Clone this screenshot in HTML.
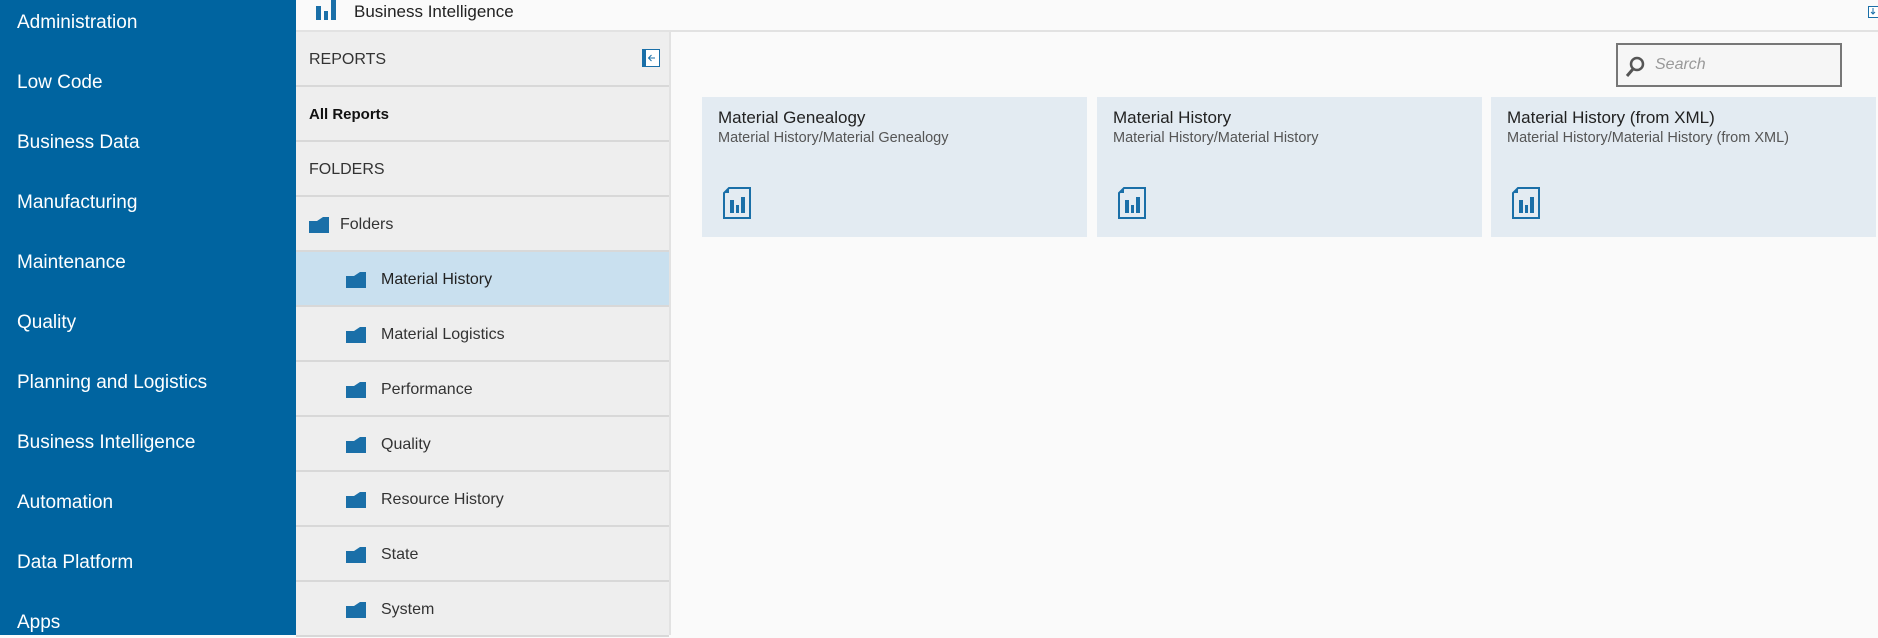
<!DOCTYPE html>
<html><head><style>
*{margin:0;padding:0;box-sizing:border-box}
body{width:1878px;height:635px;overflow:hidden;background:#fafafa;font-family:"Liberation Sans",sans-serif;position:relative}
#side{position:absolute;left:0;top:0;width:296px;height:635px;background:#0064a0}
#side div{position:absolute;left:17px;color:#fff;font-size:19px;line-height:24px}
#hdr{position:absolute;left:296px;top:0;width:1582px;height:32px;background:#fafafa;border-bottom:2px solid #e2e2e2}
#hdr .t{position:absolute;left:58px;top:2px;font-size:17px;color:#222}
#panel{position:absolute;left:296px;top:32px;width:375px;height:603px;background:#eeeeee;border-right:2px solid #e2e2e2}
.row{position:absolute;left:0;width:373px;height:55px;border-bottom:2px solid #d8d8d8;font-size:16px;color:#333;line-height:56px}
.row span{position:absolute}
.fold{position:absolute;top:20px;width:20px;height:16px}
.card{position:absolute;top:97px;width:385px;height:140px;background:#e3ebf2}
.card .a{position:absolute;left:16px;top:11px;font-size:17px;color:#222}
.card .b{position:absolute;left:16px;top:33px;font-size:14.5px;color:#555}
.card svg{position:absolute;left:21px;top:90px}
</style></head><body>
<div id="side">
<div style="top:11px">Administration</div>
<div style="top:71px">Low Code</div>
<div style="top:131px">Business Data</div>
<div style="top:191px">Manufacturing</div>
<div style="top:251px">Maintenance</div>
<div style="top:311px">Quality</div>
<div style="top:371px">Planning and Logistics</div>
<div style="top:431px">Business Intelligence</div>
<div style="top:491px">Automation</div>
<div style="top:551px">Data Platform</div>
<div style="top:611px">Apps</div>
</div>
<div id="hdr">
<svg style="position:absolute;left:20px;top:0" width="20" height="21"><rect x="0" y="6" width="5" height="14" fill="#1a6fa8"/><rect x="8" y="11" width="4" height="9" fill="#1a6fa8"/><rect x="15" y="0" width="5" height="20" fill="#1a6fa8"/></svg>
<div class="t">Business Intelligence</div>
<svg style="position:absolute;right:0;top:6px" width="10" height="12"><rect x="0.5" y="0.5" width="11" height="11" fill="#fff" stroke="#1a6fa8"/><path d="M5 2v6M3 6l2 2 2-2" stroke="#1a6fa8" fill="none"/></svg>
</div>
<div id="panel">
<div class="row" style="top:0;height:55px"><span style="left:13px">REPORTS</span>
<svg style="position:absolute;left:346px;top:17px" width="18" height="18"><rect x="0.5" y="0.5" width="17" height="17" fill="#fff" stroke="#1a6fa8"/><rect x="0" y="0" width="4" height="18" fill="#1a6fa8"/><path d="M13 9H7M9.5 6L6.5 9l3 3" stroke="#1a6fa8" fill="none"/></svg></div>
<div class="row" style="top:55px"><span style="left:13px;font-weight:bold;color:#111;font-size:15px">All Reports</span></div>
<div class="row" style="top:110px"><span style="left:13px">FOLDERS</span></div>
<div class="row" style="top:165px"><svg class="fold" style="left:13px" viewBox="0 0 20 16"><path d="M0 4h8l6-4h6v16H0z" fill="#1a6fa8"/></svg><span style="left:44px">Folders</span></div>
<div class="row" style="top:220px;background:#c9e0ef"><svg class="fold" style="left:50px" viewBox="0 0 20 16"><path d="M0 4h8l6-4h6v16H0z" fill="#1a6fa8"/></svg><span style="left:85px;color:#222">Material History</span></div>
<div class="row" style="top:275px"><svg class="fold" style="left:50px" viewBox="0 0 20 16"><path d="M0 4h8l6-4h6v16H0z" fill="#1a6fa8"/></svg><span style="left:85px">Material Logistics</span></div>
<div class="row" style="top:330px"><svg class="fold" style="left:50px" viewBox="0 0 20 16"><path d="M0 4h8l6-4h6v16H0z" fill="#1a6fa8"/></svg><span style="left:85px">Performance</span></div>
<div class="row" style="top:385px"><svg class="fold" style="left:50px" viewBox="0 0 20 16"><path d="M0 4h8l6-4h6v16H0z" fill="#1a6fa8"/></svg><span style="left:85px">Quality</span></div>
<div class="row" style="top:440px"><svg class="fold" style="left:50px" viewBox="0 0 20 16"><path d="M0 4h8l6-4h6v16H0z" fill="#1a6fa8"/></svg><span style="left:85px">Resource History</span></div>
<div class="row" style="top:495px"><svg class="fold" style="left:50px" viewBox="0 0 20 16"><path d="M0 4h8l6-4h6v16H0z" fill="#1a6fa8"/></svg><span style="left:85px">State</span></div>
<div class="row" style="top:550px"><svg class="fold" style="left:50px" viewBox="0 0 20 16"><path d="M0 4h8l6-4h6v16H0z" fill="#1a6fa8"/></svg><span style="left:85px">System</span></div>
</div>
<div style="position:absolute;left:1616px;top:43px;width:226px;height:44px;border:2px solid #777;background:#f6f6f6">
<svg style="position:absolute;left:7px;top:11px" width="20" height="22"><circle cx="12" cy="8" r="6" fill="none" stroke="#555" stroke-width="2.5"/><path d="M8 13L2 20" stroke="#555" stroke-width="3"/></svg>
<span style="position:absolute;left:37px;top:11px;font-size:16px;font-style:italic;color:#999">Search</span></div>
<div class="card" style="left:702px"><div class="a">Material Genealogy</div><div class="b">Material History/Material Genealogy</div>
<svg width="28" height="32" viewBox="0 0 28 32"><path d="M6 1H27V31H1V6Z" fill="none" stroke="#1a6fa8" stroke-width="2"/><path d="M1 6L6 1V6Z" fill="#1a6fa8"/><rect x="7" y="13" width="4" height="13" fill="#1a6fa8"/><rect x="13" y="18" width="3" height="8" fill="#1a6fa8"/><rect x="18" y="10" width="4" height="16" fill="#1a6fa8"/></svg></div>
<div class="card" style="left:1097px"><div class="a">Material History</div><div class="b">Material History/Material History</div>
<svg width="28" height="32" viewBox="0 0 28 32"><path d="M6 1H27V31H1V6Z" fill="none" stroke="#1a6fa8" stroke-width="2"/><path d="M1 6L6 1V6Z" fill="#1a6fa8"/><rect x="7" y="13" width="4" height="13" fill="#1a6fa8"/><rect x="13" y="18" width="3" height="8" fill="#1a6fa8"/><rect x="18" y="10" width="4" height="16" fill="#1a6fa8"/></svg></div>
<div class="card" style="left:1491px"><div class="a">Material History (from XML)</div><div class="b">Material History/Material History (from XML)</div>
<svg width="28" height="32" viewBox="0 0 28 32"><path d="M6 1H27V31H1V6Z" fill="none" stroke="#1a6fa8" stroke-width="2"/><path d="M1 6L6 1V6Z" fill="#1a6fa8"/><rect x="7" y="13" width="4" height="13" fill="#1a6fa8"/><rect x="13" y="18" width="3" height="8" fill="#1a6fa8"/><rect x="18" y="10" width="4" height="16" fill="#1a6fa8"/></svg></div>
</body></html>
